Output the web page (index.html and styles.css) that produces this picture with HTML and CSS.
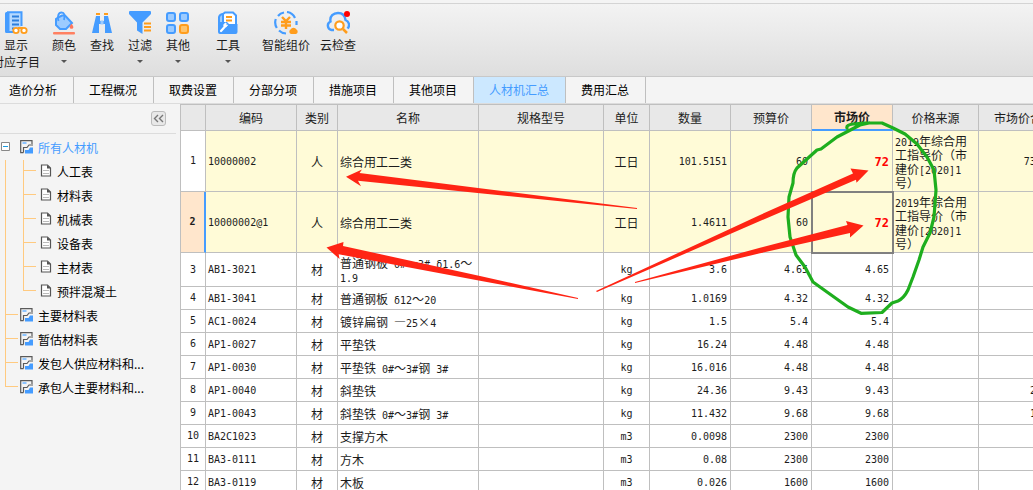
FILE: index.html
```html
<!DOCTYPE html>
<html lang="zh-CN">
<head>
<meta charset="utf-8">
<title>人材机汇总</title>
<link rel="stylesheet" href="styles.css">
</head>
<body>
<svg class="defs" aria-hidden="true">
  <symbol id="sheet" viewBox="0 0 14 14">
    <path d="M12 4V.6H.7v12H3.500" fill="none" stroke="#5a5a5a" stroke-width="1.200"/>
    <path d="M2.500 2h4v2h-4z" fill="#8cc4ff"/>
    <path d="M3.500 12.500V7.500H7L9 5h4" fill="none" stroke="#5a5a5a" stroke-width="1.200"/>
    <path d="M5 13.500V10h3.500L10 7.500h3v6z" fill="#459cff"/>
  </symbol>
  <symbol id="page" viewBox="0 0 12 13">
    <path d="M1.500 1h6l3 3v8h-9z" fill="#fff" stroke="#555" stroke-width="1.200"/>
    <path d="M7 1v3.500h4z" fill="#555"/>
    <path d="M3 6.500h6M3 9.500h6" stroke="#bbb"/>
  </symbol>
</svg>
<div class="app">
  <header class="toolbar">
    <div class="group first">
      <button class="tool" type="button">
        <svg class="icon" viewBox="0 0 24 24">
          <path d="M1 2.500A1.500 1.500 0 0 1 2.500 1H5v21H2.500A1.500 1.500 0 0 1 1 20.500z" fill="#459cff"/>
          <path d="M9 21H4V1.200h13.500V15" fill="#b5d9ff" stroke="#459cff" stroke-width="2"/>
          <path d="M8 5.500h7M8 9.500h7M8 13.500h7M8 17.500h2" stroke="#2d7fdc" stroke-width="2"/>
          <path d="M4 1v20" stroke="#459cff" stroke-width="3"/>
          <path d="M14 17h5" stroke="#ff9d1c" stroke-width="2"/>
          <circle cx="12" cy="19.500" r="2.700" fill="#fff" stroke="#ff9d1c" stroke-width="1.800"/>
          <circle cx="20" cy="19.500" r="2.700" fill="#fff" stroke="#ff9d1c" stroke-width="1.800"/>
        </svg>
        <span>显示</span><span>对应子目</span>
      </button>
    </div>
    <div class="group">
      <button class="tool" type="button">
        <svg class="icon" viewBox="0 0 24 24">
          <path d="M6 6.500l4-2h3l7 7.500-6 6H8l-4-4V8z" fill="#9ccbff" stroke="#459cff" stroke-width="2"/>
          <path d="M6.500 10c-1.500-5 0-8.500 3-8.500S13 4 12 9" fill="none" stroke="#459cff" stroke-width="1.800"/>
          <path d="M19.500 14c1.500 2 1.500 3 0 3s-1.500-1 0-3z" fill="#ff765b" stroke="#ff765b" stroke-width="1.500"/>
          <rect x="1" y="21" width="22" height="2.500" rx="1" fill="#ff8061"/>
        </svg>
        <span>颜色</span><i class="caret"></i>
      </button>
      <button class="tool" type="button">
        <svg class="icon" viewBox="0 0 24 24">
          <path d="M6 5h4v5h4V5h4l4 17h-7v-9h-6v9H2z" fill="#459cff"/>
          <path d="M6 2h4v2H6zM14 2h4v2h-4z" fill="#ff9d1c"/>
          <path d="M12 9.500v4" stroke="#9ccbff" stroke-width="3"/>
        </svg>
        <span>查找</span>
      </button>
      <button class="tool" type="button">
        <svg class="icon" viewBox="0 0 24 24">
          <path d="M1 1q0-1 1-1h20q1 0 1 1v2l-8.500 8.500V23L9 19.500v-8L1 3z" fill="#459cff"/>
          <path d="M16 12.500h7M16 16h7M16 19.500h7" stroke="#ff9d1c" stroke-width="1.800"/>
        </svg>
        <span>过滤</span><i class="caret"></i>
      </button>
      <button class="tool" type="button">
        <svg class="icon" viewBox="0 0 24 24">
          <g fill="#9ccbff" stroke="#459cff" stroke-width="2">
            <rect x="1" y="2" width="8" height="8" rx="2"/><rect x="14" y="2" width="8" height="8" rx="2"/>
            <rect x="1" y="14" width="8" height="8" rx="2"/>
            <rect x="14" y="14" width="8" height="8" rx="2" fill="#ffc46b" stroke="#ff9d1c"/>
          </g>
        </svg>
        <span>其他</span><i class="caret"></i>
      </button>
    </div>
    <div class="group">
      <button class="tool" type="button">
        <svg class="icon" viewBox="0 0 24 24">
          <path d="M7 14V3l2-1.500h8l3 3V14" fill="#fff" stroke="#459cff" stroke-width="2"/>
          <path d="M3 12V6q1-3 4-3v9z" fill="#9ccbff" stroke="#459cff" stroke-width="2"/>
          <path d="M10 6h6M10 9.500h6" stroke="#ff9d1c" stroke-width="2"/>
          <path d="M2 11h9l2 2h8.500v8q0 2-2 2H4q-2 0-2-2z" fill="#459cff"/>
          <path d="M5 20l4-4.500" stroke="#fff" stroke-width="2.200" stroke-linecap="round"/>
          <path d="M10 12a2.500 2.500 0 0 0-2 3.500 2.500 2.500 0 0 0 3.500-1.500l-1.500.500z" fill="#fff" stroke="#fff"/>
        </svg>
        <span>工具</span><i class="caret"></i>
      </button>
    </div>
    <div class="group last">
      <button class="tool" type="button">
        <svg class="icon" viewBox="0 0 24 24">
          <path d="M13 1a10.500 10.500 0 0 1 8 6M22.500 10v4M4 5A10.500 10.500 0 0 1 10 1.500M1.800 8a10.500 10.500 0 0 0 1 9M5 19.500a11 11 0 0 0 7 3" fill="none" stroke="#459cff" stroke-width="2.200"/>
          <path d="M8 6l4 4 4-4M7 11h10M7 14.500h10M12 10v8" fill="none" stroke="#ff9d1c" stroke-width="2.400"/>
          <path d="M17 23a2.500 2.500 0 0 1-.500-4.500 3.500 3.500 0 0 1 6 0A2.500 2.500 0 0 1 22 23z" fill="#ff9d1c"/>
        </svg>
        <span>智能组价</span>
      </button>
      <button class="tool" type="button">
        <svg class="icon" viewBox="0 0 24 24">
          <path d="M8 19H5.500a4.500 4.500 0 0 1-1-8.500C3.500 5 7.500 2 12 2c4 0 7 2.500 7.500 7 4 1.500 4.500 6 2 8.500" fill="none" stroke="#459cff" stroke-width="2.400"/>
          <circle cx="13.500" cy="14.500" r="4.200" fill="#fff" stroke="#ff9d1c" stroke-width="2.200"/>
          <path d="M17 18l4 4" stroke="#ff9d1c" stroke-width="2.500"/>
          <circle cx="21" cy="3" r="3" fill="#f00"/>
        </svg>
        <span>云检查</span>
      </button>
    </div>
  </header>

  <nav class="tabs" role="tablist">
    <button type="button" role="tab">造价分析</button>
    <button type="button" role="tab">工程概况</button>
    <button type="button" role="tab">取费设置</button>
    <button type="button" role="tab">分部分项</button>
    <button type="button" role="tab">措施项目</button>
    <button type="button" role="tab">其他项目</button>
    <button type="button" role="tab" class="active" aria-selected="true">人材机汇总</button>
    <button type="button" role="tab">费用汇总</button>
  </nav>

  <main class="work">
    <aside class="side">
      <div class="side-head">
        <button class="fold" type="button" aria-label="收起">
          <svg viewBox="0 0 11 9"><path d="M5 1L1.500 4.500 5 8M10 1L6.500 4.500 10 8" fill="none" stroke="#777" stroke-width="1.400"/></svg>
        </button>
      </div>
      <ul class="tree">
        <li>
          <a class="node root" href="#"><svg class="minus" viewBox="0 0 9 9"><path d="M.5.5h8v8h-8z" fill="#fff" stroke="#888"/><path d="M2 4.500h5" stroke="#1b9be0"/></svg><svg class="sheet"><use href="#sheet"/></svg>所有人材机</a>
          <ul>
            <li><a class="node leaf" href="#"><svg class="page"><use href="#page"/></svg>人工表</a></li>
            <li><a class="node leaf" href="#"><svg class="page"><use href="#page"/></svg>材料表</a></li>
            <li><a class="node leaf" href="#"><svg class="page"><use href="#page"/></svg>机械表</a></li>
            <li><a class="node leaf" href="#"><svg class="page"><use href="#page"/></svg>设备表</a></li>
            <li><a class="node leaf" href="#"><svg class="page"><use href="#page"/></svg>主材表</a></li>
            <li><a class="node leaf end" href="#"><svg class="page"><use href="#page"/></svg>预拌混凝土</a></li>
          </ul>
        </li>
        <li><a class="node branch" href="#"><svg class="sheet"><use href="#sheet"/></svg>主要材料表</a></li>
        <li><a class="node branch" href="#"><svg class="sheet"><use href="#sheet"/></svg>暂估材料表</a></li>
        <li><a class="node branch" href="#"><svg class="sheet"><use href="#sheet"/></svg>发包人供应材料和...</a></li>
        <li><a class="node branch end" href="#"><svg class="sheet"><use href="#sheet"/></svg>承包人主要材料和...</a></li>
      </ul>
    </aside>

    <section class="grid-pane">
      <table class="grid">
        <colgroup><col class="c-idx"><col class="c-code"><col class="c-kind"><col class="c-name"><col class="c-spec"><col class="c-unit"><col class="c-num"><col class="c-num"><col class="c-num"><col class="c-src"><col class="c-sum"></colgroup>
        <thead>
          <tr><th></th><th>编码</th><th>类别</th><th>名称</th><th>规格型号</th><th>单位</th><th>数量</th><th>预算价</th><th class="current">市场价</th><th>价格来源</th><th>市场价合计</th></tr>
        </thead>
        <tbody>
          <tr class="tall"><th>1</th><td class="code">10000002</td><td class="mid">人</td><td>综合用工二类</td><td></td><td class="mid">工日</td><td class="num">101.5151</td><td class="num">60</td><td class="num changed">72</td><td><b>2019</b>年综合用<br>工指导价（市<br>建价<b>[2020]1</b><br>号）</td><td class="num">7309.09</td></tr>
          <tr class="tall picked"><th>2</th><td class="code">10000002@1</td><td class="mid">人</td><td>综合用工二类</td><td></td><td class="mid">工日</td><td class="num">1.4611</td><td class="num">60</td><td class="num changed focus">72</td><td><b>2019</b>年综合用<br>工指导价（市<br>建价<b>[2020]1</b><br>号）</td><td></td></tr>
          <tr class="double"><th>3</th><td class="code">AB1-3021</td><td class="mid">材</td><td>普通钢板<b> 0#</b>～<b>3# δ1.6</b>～<br><b>1.9</b></td><td></td><td class="unit">kg</td><td class="num">3.6</td><td class="num">4.65</td><td class="num">4.65</td><td></td><td></td></tr>
          <tr><th>4</th><td class="code">AB1-3041</td><td class="mid">材</td><td>普通钢板<b> δ12</b>～<b>20</b></td><td></td><td class="unit">kg</td><td class="num">1.0169</td><td class="num">4.32</td><td class="num">4.32</td><td></td><td></td></tr>
          <tr><th>5</th><td class="code">AC1-0024</td><td class="mid">材</td><td>镀锌扁钢<b> </b>—<b>25</b>×<b>4</b></td><td></td><td class="unit">kg</td><td class="num">1.5</td><td class="num">5.4</td><td class="num">5.4</td><td></td><td></td></tr>
          <tr><th>6</th><td class="code">AP1-0027</td><td class="mid">材</td><td>平垫铁</td><td></td><td class="unit">kg</td><td class="num">16.24</td><td class="num">4.48</td><td class="num">4.48</td><td></td><td></td></tr>
          <tr><th>7</th><td class="code">AP1-0030</td><td class="mid">材</td><td>平垫铁<b> 0#</b>～<b>3#</b>钢<b> 3#</b></td><td></td><td class="unit">kg</td><td class="num">16.016</td><td class="num">4.48</td><td class="num">4.48</td><td></td><td></td></tr>
          <tr><th>8</th><td class="code">AP1-0040</td><td class="mid">材</td><td>斜垫铁</td><td></td><td class="unit">kg</td><td class="num">24.36</td><td class="num">9.43</td><td class="num">9.43</td><td></td><td class="num">229.71</td></tr>
          <tr><th>9</th><td class="code">AP1-0043</td><td class="mid">材</td><td>斜垫铁<b> 0#</b>～<b>3#</b>钢<b> 3#</b></td><td></td><td class="unit">kg</td><td class="num">11.432</td><td class="num">9.68</td><td class="num">9.68</td><td></td><td class="num">110.66</td></tr>
          <tr><th>10</th><td class="code">BA2C1023</td><td class="mid">材</td><td>支撑方木</td><td></td><td class="unit">m3</td><td class="num">0.0098</td><td class="num">2300</td><td class="num">2300</td><td></td><td></td></tr>
          <tr><th>11</th><td class="code">BA3-0111</td><td class="mid">材</td><td>方木</td><td></td><td class="unit">m3</td><td class="num">0.08</td><td class="num">2300</td><td class="num">2300</td><td></td><td></td></tr>
          <tr><th>12</th><td class="code">BA3-0119</td><td class="mid">材</td><td>木板</td><td></td><td class="unit">m3</td><td class="num">0.026</td><td class="num">1600</td><td class="num">1600</td><td></td><td></td></tr>
        </tbody>
      </table>
    </section>
  </main>

  <svg class="marks" width="1033" height="490" viewBox="0 0 1033 490" aria-hidden="true">
    <path d="M847 128Q846 125 853 124L865 123H882L893 128L905 134L917 144L927 157L934 170L936 190L934 217L930 233L923 247L919 260L913 277L908 290Q904 298 898 301L892 303L882 312.500L861 313.300L848 307L813 282L805 267L796 255L790 237L788 217L789 197L793 183Q793 173 797 168L817 150L821 149L837 137L860 125L869 123" fill="none" stroke="#1eae1e" stroke-width="3.200" stroke-linejoin="round" stroke-linecap="round"/>
    <g fill="#ff2414">
      <path d="M346 176.700L362 169.500L359.500 173L480 188.300L637 208L637 209L480 193.300L358 180.700L361 186.300Z"/>
      <path d="M326.500 247.500L343.500 242L343 246L480 276L578 298L578 299L480 280.700L338.700 254.300L339.500 259Z"/>
      <path d="M868.500 170.500L850.500 168.500L853 173.500L760 215L596 291L597 292L760 221L856 179.700L856.500 182.700Z"/>
      <path d="M863.500 225.500L846 221L847.500 225L760 247.700L635 282L635 283L760 253.300L850 233L850 237.500Z"/>
    </g>
  </svg>
</div>
</body>
</html>
```

FILE: styles.css
```css
* { box-sizing: border-box; }

body {
  margin: 0;
  background: #f4f4f4;
  color: #1c1c1c;
  font: 12px/16px "Noto Sans CJK SC", sans-serif;
}

button {
  margin: 0;
  padding: 0;
  border: 0;
  background: none;
  color: inherit;
  font: inherit;
}

ul { margin: 0; padding: 0; list-style: none; }
a { color: inherit; text-decoration: none; }
svg { display: block; flex: none; }
.defs { position: absolute; width: 0; height: 0; }

.app {
  position: relative;
  display: flex;
  flex-direction: column;
  height: 100vh;
  overflow: hidden;
}

.toolbar {
  display: flex;
  flex: none;
  height: 74px;
  margin-top: 3px;
  padding-top: 7px;
  border-top: 1px solid #d4d4d4;
  border-bottom: 1px solid #c8c8c8;
  background: linear-gradient(#f3f3f3, #dedede);
}

.group { display: flex; gap: 14px; margin-right: 26px; }
.group.first { margin-left: -8px; margin-right: 12px; }
.group:nth-child(3) { margin-right: 22px; }
.group.last { gap: 10px; }

.tool {
  display: flex;
  flex-direction: column;
  align-items: center;
  justify-content: flex-start;
  white-space: nowrap;
}
.tool span { line-height: 17px; }
.icon { width: 24px; height: 24px; margin-bottom: 1px; }
.caret {
  margin-top: 7px;
  border: 3px solid transparent;
  border-top-color: #555;
  border-bottom: 0;
}

.tabs {
  display: flex;
  flex: none;
  height: 27px;
  margin-left: -6px;
  border-bottom: 1px solid #dcdcdc;
  color: #000;
}
.tabs button {
  padding: 0 16px 0 15px;
  border-right: 1px solid #bfbfbf;
}
.tabs .active { background: #cce8ff; color: #459cff; }

.work { display: flex; flex: 1; min-height: 0; }

.side { flex: none; width: 180px; padding-right: 4px; }
.side-head {
  display: flex;
  justify-content: flex-end;
  height: 30px;
  padding: 7px 10px 0 0;
  border-bottom: 1px solid #dcdcdc;
}
.fold {
  display: flex;
  align-items: center;
  justify-content: center;
  width: 15px;
  height: 15px;
  border: 1px solid #bbb;
  border-radius: 3px;
  background: #e8e8e8;
}
.fold svg { width: 11px; height: 9px; }

.tree { padding-top: 2px; color: #000; }
.node {
  --line: linear-gradient(#ffca80, #ffca80);
  display: flex;
  align-items: center;
  height: 24px;
  background-repeat: no-repeat;
  white-space: nowrap;
}
.node svg { margin-bottom: 3px; }
.sheet { width: 14px; height: 14px; margin-right: 4px; }
.page { width: 12px; height: 13px; margin-right: 5px; }
.minus { width: 9px; height: 9px; margin-right: 10px; }
.root { padding-left: 1px; color: #459cff; }
.branch {
  padding-left: 20px;
  background-image: var(--line), var(--line);
  background-position: 5px 0, 5px 10px;
  background-size: 1px 100%, 13px 1px;
}
.branch.end { background-size: 1px 10px, 13px 1px; }
.leaf {
  padding-left: 40px;
  background-image: var(--line), var(--line), var(--line);
  background-position: 5px 0, 23px 0, 23px 10px;
  background-size: 1px 100%, 1px 100%, 13px 1px;
}
.leaf.end { background-size: 1px 100%, 1px 10px, 13px 1px; }

.grid-pane { flex: 1; min-width: 0; overflow: hidden; }
.grid {
  width: 890px;
  border-top: 1px solid #bfbfbf;
  border-left: 1px solid #bfbfbf;
  border-spacing: 0;
  table-layout: fixed;
  background: #fff;
}
.c-idx { width: 25px; }
.c-code { width: 91px; }
.c-kind { width: 41px; }
.c-name { width: 141px; }
.c-spec { width: 125px; }
.c-unit { width: 46px; }
.c-num { width: 81px; }
.c-src { width: 86px; }
.c-sum { width: 91px; }

.grid th, .grid td {
  height: 23px;
  padding: 2px 2px 0;
  border-right: 1px solid #bfbfbf;
  border-bottom: 1px solid #bfbfbf;
  line-height: 14px;
  text-align: left;
  white-space: nowrap;
}
.grid th { padding: 0; font-weight: 400; text-align: center; }
.grid thead th { height: 26px; background: #e8e8e8; }
.grid thead .current {
  border-bottom: 2px solid #459cff;
  background: #ffe6cc;
  font-weight: 700;
}
.grid b, .grid .code, .grid .num, .grid .unit, .grid tbody th {
  font-family: "DejaVu Sans Mono", monospace;
  font-size: 10px;
  font-weight: 400;
}
.grid b { line-height: 10px; white-space: pre; }
.grid .mid, .grid .unit { text-align: center; }
.grid .num { padding-right: 3px; text-align: right; }
.grid .tall th, .grid .tall td { height: 61px; }
.grid .double th, .grid .double td { height: 34px; }
.grid .double td { padding-top: 1px; }
.grid .tall td { background: #fffbd7; }
.grid .picked th {
  border-right: 2px solid #459cff;
  background: #ffe6cc;
  font-weight: 700;
}
.grid .changed {
  color: #f00;
  font-size: 12px;
  font-weight: 700;
}
.grid .focus { outline: 2px solid #808080; outline-offset: -1px; }

.marks {
  position: absolute;
  top: 0;
  left: 0;
  pointer-events: none;
}
```
